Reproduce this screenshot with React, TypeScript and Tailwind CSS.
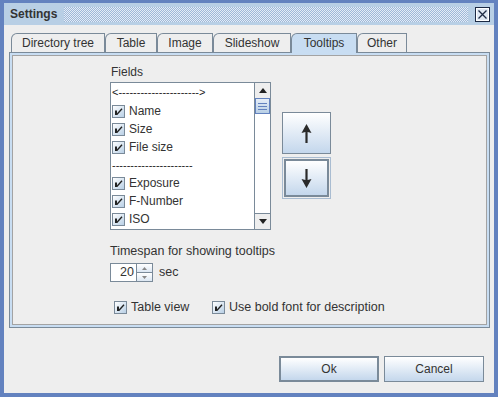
import React from "react";

const tabs = [
  { label: "Directory tree", w: "w-[94px]" },
  { label: "Table", w: "w-[52px]" },
  { label: "Image", w: "w-[56px]" },
  { label: "Slideshow", w: "w-[78px]" },
  { label: "Tooltips", w: "w-[66px]" },
  { label: "Other", w: "w-[50px]" },
];

type Row = { label: string; kind: "arrows" | "sep" | "check" };

const rows: Row[] = [
  { label: "<" + "-".repeat(22) + ">", kind: "arrows" },
  { label: "Name", kind: "check" },
  { label: "Size", kind: "check" },
  { label: "File size", kind: "check" },
  { label: "-".repeat(22), kind: "sep" },
  { label: "Exposure", kind: "check" },
  { label: "F-Number", kind: "check" },
  { label: "ISO", kind: "check" },
];

function CheckBox() {
  return (
    <span className="w-[13px] h-[13px] shrink-0 border border-[#7A8A99] bg-linear-to-br from-white to-[#B8CFE5] flex">
      <svg width="11" height="11" viewBox="0 0 11 11">
        <path d="M2 4.5 V9 H4.3 L9.5 3.2 L8.5 2.2 L4 7.2 V4.5 Z" fill="#222" />
      </svg>
    </span>
  );
}

function Arrow({ down }: { down?: boolean }) {
  return (
    <svg width="11" height="19" viewBox="0 0 11 19" className={down ? "rotate-180" : ""}>
      <path d="M5.5 0 L10.5 9 L6.6 8 L6.6 19 L4.4 19 L4.4 8 L0.5 9 Z" fill="#2a2a2a" />
    </svg>
  );
}

export default function App() {
  return (
    <div className="w-[498px] h-[397px] bg-[#6382BF] pt-[3px] px-[4px] pb-[4px] flex flex-col font-['Liberation_Sans',Arial,sans-serif] text-[12px] text-[#333]">
      {/* title bar */}
      <div className="h-[22px] bg-[#B8CFE5] flex items-center pl-[6px] pr-[4px]">
        <span className="font-bold text-[#333]">Settings</span>
        <div className="ml-[7px] flex-1 h-[15px] bg-[repeating-conic-gradient(#e4edf7_0_25%,#9fb8d8_0_50%)] bg-[length:2px_2px]" />
        <div className="ml-[7px] w-[15px] h-[15px] border border-[#1c2a44] bg-[#dfe8f3] flex items-center justify-center">
          <svg width="13" height="13" viewBox="0 0 13 13">
            <rect x="0.5" y="0.5" width="12" height="12" fill="none" stroke="#ffffff" />
            <path d="M2.5 2.5 L10.5 10.5 M10.5 2.5 L2.5 10.5" stroke="#1c2a44" strokeWidth="1.3" />
          </svg>
        </div>
      </div>

      {/* body */}
      <div className="flex-1 bg-[#EEEEEE] flex flex-col px-[5px] pt-[8px]">
        <div className="flex items-start h-[19px] ml-[2px]">
          {tabs.map((t) => {
            const sel = t.label === "Tooltips";
            return (
              <div
                key={t.label}
                className={`relative ${t.w} text-center border-x border-t border-[#7A8A99] rounded-tl-[6px] leading-[18px] ${
                  sel ? "h-[20px] z-10 bg-[#C8DDF2]" : "h-[19px] bg-[#EEEEEE]"
                }`}
              >
                {t.label}
              </div>
            );
          })}
        </div>

        {/* tab panel */}
        <div className="w-[481px] h-[276px] border border-[#7A8A99] p-[2px] bg-[#C8DDF2]">
          <div className="h-full border border-[#A3A3A3] bg-[#EEEEEE] pl-[97px] pt-[9px] flex flex-col">
            <div className="leading-[14px] pl-[1px]">Fields</div>

            <div className="flex mt-[3px]">
              <div className="w-[161px] h-[148px] border border-[#7A8A99] bg-white flex">
                <div className="flex-1 flex flex-col pl-[1px]">
                  {rows.map((r, i) => (
                    <div key={i} className={`${i === 0 ? "h-[19px]" : "h-[18px]"} flex items-center gap-[4px]`}>
                      {r.kind === "check" && <CheckBox />}
                      <span className={r.kind === "check" ? "text-[12px]" : "text-[11px] text-[#222]"}>
                        {r.label}
                      </span>
                    </div>
                  ))}
                </div>
                <div className="w-[16px] border-l border-[#7A8A99] flex flex-col">
                  <div className="h-[15px] bg-[#EEEEEE] flex items-center justify-center">
                    <svg width="8" height="5" viewBox="0 0 8 5">
                      <path d="M0 5 L4 0 L8 5 Z" fill="#222" />
                    </svg>
                  </div>
                  <div className="h-[16px] border border-[#6382BF] bg-linear-to-b from-[#e6eef8] to-[#B8CFE5] flex flex-col items-center justify-center gap-[2px]">
                    <div className="w-[9px] h-px bg-[#6382BF]" />
                    <div className="w-[9px] h-px bg-[#6382BF]" />
                    <div className="w-[9px] h-px bg-[#6382BF]" />
                  </div>
                  <div className="flex-1 bg-white" />
                  <div className="h-[16px] border-t border-[#7A8A99] bg-[#EEEEEE] flex items-center justify-center">
                    <svg width="8" height="5" viewBox="0 0 8 5">
                      <path d="M0 0 L8 0 L4 5 Z" fill="#222" />
                    </svg>
                  </div>
                </div>
              </div>

              <div className="ml-[11px] pt-[30px] flex flex-col gap-[3px]">
                <div className="w-[49px] h-[42px] border border-[#7A8A99] bg-linear-to-b from-white to-[#C4D7EC] flex items-center justify-center">
                  <Arrow />
                </div>
                <div className="w-[49px] h-[42px] border border-[#A9BCD1] p-px">
                  <div className="w-full h-full border-2 border-[#7A8A99] bg-linear-to-b from-white to-[#C4D7EC] flex items-center justify-center">
                    <Arrow down />
                  </div>
                </div>
              </div>
            </div>

            <div className="mt-[14px] leading-[14px] text-[12.5px]">Timespan for showing tooltips</div>

            <div className="mt-[5px] flex items-center">
              <div className="w-[27px] h-[19px] border border-[#7A8A99] bg-white text-right pr-[2px] leading-[17px] text-[12.5px]">
                20
              </div>
              <div className="w-[16px] h-[19px] flex flex-col border-y border-r border-[#7A8A99]">
                <div className="flex-1 border-b border-[#7A8A99] bg-linear-to-b from-white to-[#dce7f3] flex items-center justify-center">
                  <svg width="5" height="3" viewBox="0 0 5 3">
                    <path d="M0 3 L2.5 0 L5 3 Z" fill="#888" />
                  </svg>
                </div>
                <div className="flex-1 bg-linear-to-b from-white to-[#dce7f3] flex items-center justify-center">
                  <svg width="5" height="3" viewBox="0 0 5 3">
                    <path d="M0 0 L5 0 L2.5 3 Z" fill="#888" />
                  </svg>
                </div>
              </div>
              <span className="ml-[6px] text-[12.5px]">sec</span>
            </div>

            <div className="mt-[17px] flex items-center h-[16px] pl-[4px] text-[12.5px]">
              <div className="w-[98px] flex items-center gap-[4px]">
                <CheckBox />
                <span>Table view</span>
              </div>
              <div className="flex items-center gap-[4px]">
                <CheckBox />
                <span>Use bold font for description</span>
              </div>
            </div>
          </div>
        </div>

        <div className="flex-1" />

        {/* buttons */}
        <div className="flex justify-end gap-[5px] mr-[5px] mb-[11px]">
          <button className="w-[100px] h-[26px] border-2 border-[#7A8A99] bg-linear-to-b from-white to-[#C4D7EC] text-[#333]">
            Ok
          </button>
          <button className="w-[100px] h-[26px] border border-[#7A8A99] bg-linear-to-b from-white to-[#C4D7EC] text-[#333]">
            Cancel
          </button>
        </div>
      </div>
    </div>
  );
}
